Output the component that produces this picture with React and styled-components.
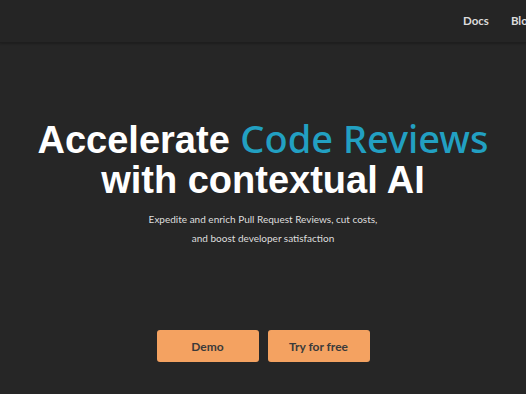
import React from "react";
import styled, { createGlobalStyle } from "styled-components";

const Global = createGlobalStyle`
  html, body { margin: 0; padding: 0; background: #262626; }
  body { overflow: hidden; }
  * { box-sizing: border-box; }
`;

const Page = styled.div`
  min-height: 394px;
  background: #262626;
  display: flex;
  flex-direction: column;
`;

const Header = styled.header`
  height: 43px;
  display: grid;
  grid-template-columns: 1fr 63px;
  align-items: center;
  background: #252525;
  border-bottom: 1px solid #1e1e1e;
  box-shadow: 0 1px 2px rgba(0,0,0,0.25);
  overflow: hidden;
`;

const Nav = styled.nav`
  display: flex;
  gap: 22px;
  white-space: nowrap;
  padding-bottom: 2px;
`;

const NavLink = styled.a`
  font-family: Lato, "Noto Sans", sans-serif;
  font-size: 11.5px;
  font-weight: 700;
  color: #dcdcdc;
  text-decoration: none;
`;

const Hero = styled.main`
  display: flex;
  flex-direction: column;
  align-items: center;
  padding-top: 75px;
`;

const Title = styled.h1`
  margin: 0;
  font-family: "Liberation Sans", Arial, sans-serif;
  font-weight: 700;
  font-size: 38px;
  line-height: 40px;
  color: #ffffff;
  text-align: center;
`;

const Accent = styled.span`
  font-family: "Noto Sans", "Open Sans", sans-serif;
  font-weight: 500;
  color: #22a0c2;
`;

const Sub = styled.p`
  margin: 10px 0 0;
  font-family: Lato, "Noto Sans", sans-serif;
  font-size: 10px;
  line-height: 19px;
  color: #dedede;
  text-align: center;
`;

const Actions = styled.div`
  display: flex;
  gap: 9px;
  margin-top: 82px;
`;

const Button = styled.button`
  width: 102px;
  height: 32px;
  border: none;
  border-radius: 3px;
  background: #f4a261;
  color: #3a3a3a;
  font-family: Lato, "Noto Sans", sans-serif;
  font-size: 12px;
  font-weight: 700;
  cursor: pointer;
`;

export default function App() {
  return (
    <>
      <Global />
      <Page>
        <Header>
          <span />
          <Nav>
            <NavLink href="#">Docs</NavLink>
            <NavLink href="#">Blog</NavLink>
            <NavLink href="#">Pricing</NavLink>
          </Nav>
        </Header>
        <Hero>
          <Title>
            Accelerate <Accent>Code Reviews</Accent>
            <br />
            with contextual AI
          </Title>
          <Sub>
            Expedite and enrich Pull Request Reviews, cut costs,
            <br />
            and boost developer satisfaction
          </Sub>
          <Actions>
            <Button>Demo</Button>
            <Button>Try for free</Button>
          </Actions>
        </Hero>
      </Page>
    </>
  );
}
